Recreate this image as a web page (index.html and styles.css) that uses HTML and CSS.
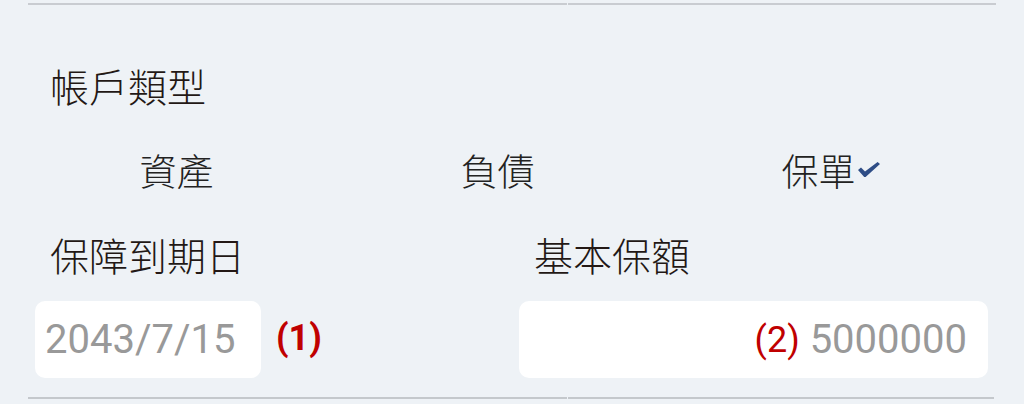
FILE: index.html
```html
<!DOCTYPE html>
<html lang="zh-Hant">
<head>
    <meta charset="UTF-8">
    <meta name="viewport" content="width=device-width, initial-scale=1.0">
    <title>帳戶類型</title>
    <link rel="stylesheet" href="styles.css">
</head>
<body>
    <div class="rule">
        <span class="rule-left"></span>
        <span class="rule-right"></span>
    </div>

    <div class="page">
        <div class="title">帳戶類型</div>

        <div class="options">
            <div class="option">資產</div>
            <div class="option">負債</div>
            <div class="option">
                <span class="picked">保單<svg class="check" width="22" height="15" viewBox="0 0 22 15"><path d="M0 8 L3 5.6 L7 9.4 L19.6 0 L22 2 L7.6 15 L6.2 15 Z"/></svg></span>
            </div>
        </div>

        <div class="fields">
            <div class="field">
                <div class="label">保障到期日</div>
                <div class="field-row">
                    <div class="box box-date">2043/7/15</div>
                    <span class="mark mark-bold">(1)</span>
                </div>
            </div>
            <div class="field">
                <div class="label">基本保額</div>
                <div class="box box-amount"><span class="mark">(2)</span> 5000000</div>
            </div>
        </div>
    </div>

    <div class="rule rule-bottom">
        <span class="rule-left"></span>
        <span class="rule-right"></span>
    </div>
</body>
</html>
```

FILE: styles.css
```css
body {
    margin: 0;
    background-color: #eef2f6;
    font-family: "Noto Sans CJK TC", "Noto Sans", sans-serif;
    font-weight: 300;
    color: #231815;
}

.rule {
    display: flex;
    gap: 1px;
    margin: 3px 28px 0 28px;
}

.rule span {
    height: 2px;
    background-color: #c9ccd1;
}

.rule-left {
    width: 539px;
}

.rule-right {
    flex: 1;
}

.rule-bottom {
    margin: 19px 30px 0 28px;
}

.rule-bottom span {
    height: 2px;
    background-color: #c4c8cc;
}

.page {
    padding: 0 36px 0 35px;
}

.title,
.label {
    font-size: 39px;
    line-height: 48px;
    padding-left: 15px;
}

.title {
    margin-top: 56px;
}

.options {
    display: grid;
    grid-template-columns: repeat(3, 321px);
    margin: 37px 0 0 -19px;
    font-size: 37px;
    line-height: 48px;
    color: #222;
}

.option {
    text-align: center;
}

.picked {
    position: relative;
}

.check {
    position: absolute;
    left: 100%;
    top: 19px;
    margin-left: 2px;
    fill: #2e4d86;
}

.fields {
    display: grid;
    grid-template-columns: 1fr 1fr;
    gap: 15px;
    margin-top: 36px;
}

.label {
    margin-bottom: 23px;
}

.field-row {
    display: flex;
    align-items: center;
    gap: 15px;
}

.box {
    height: 77px;
    background-color: #fff;
    border-radius: 10px;
    display: flex;
    align-items: center;
    font-family: Roboto, sans-serif;
    font-weight: 400;
    font-size: 40px;
    color: #999;
}

.box-date {
    width: 216px;
    padding-left: 10px;
}

.box-amount {
    justify-content: flex-end;
    padding-right: 21px;
    white-space: pre;
}

.mark {
    font-family: Roboto, sans-serif;
    font-weight: 400;
    font-size: 36px;
    color: #c00000;
}

.mark-bold {
    font-weight: bold;
    margin-top: -4px;
}
```
